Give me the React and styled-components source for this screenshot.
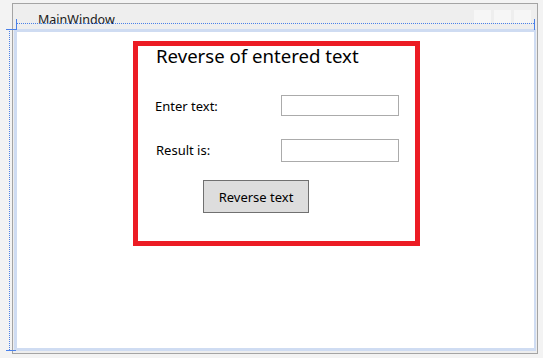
import React from "react";
import styled, { createGlobalStyle } from "styled-components";

const Global = createGlobalStyle`
  html, body { margin: 0; padding: 0; }
  body {
    background: #f3f3f3;
    font-family: "Noto Sans", "Open Sans", sans-serif;
    width: 543px;
    height: 358px;
    overflow: hidden;
  }
`;

const Stage = styled.div`
  position: relative;
  width: 543px;
  height: 358px;
  padding: 3px 0 0 12px;
  box-sizing: border-box;
`;

const Frame = styled.div`
  width: 526px;
  height: 351px;
  box-sizing: border-box;
  border: 1px solid #a4a4a4;
  background: #eeeeee;
  display: flex;
  flex-direction: column;
  padding: 0 1px 2px 1px;
`;

const TitleBar = styled.div`
  height: 25px;
  display: flex;
  align-items: flex-start;
  padding: 0 5px 0 24px;
  flex-shrink: 0;
`;

const TitleText = styled.span`
  font-size: 12.5px;
  color: #1a1a1a;
  line-height: 14px;
  margin-top: 9px;
`;

const CaptionButtons = styled.div`
  margin-left: auto;
  margin-top: 6px;
  display: flex;
  gap: 3px;
`;

const CaptionButton = styled.div`
  width: 17px;
  height: 13px;
  background: #f6f6f6;
`;

const Client = styled.div`
  flex: 1;
  background: #ffffff;
  border: 3px solid #cfdcf2;
  border-right-width: 2px;
  display: flex;
  flex-direction: column;
`;

const RedBox = styled.div`
  margin: 9px 0 0 116px;
  width: 287px;
  height: 205px;
  box-sizing: border-box;
  border: 5px solid #ec1c24;
  padding: 0 0 0 17px;
  display: flex;
  flex-direction: column;
  align-items: flex-start;
`;

const Heading = styled.div`
  font-size: 18.6px;
  line-height: 20px;
  color: #000;
  margin-left: 1px;
  white-space: nowrap;
`;

const Row = styled.div`
  display: flex;
  align-items: center;
  margin-top: ${(p) => p.$top}px;
  height: ${(p) => p.$h}px;
`;

const Label = styled.div`
  width: 126px;
  font-size: 13px;
  color: #000;
  padding-left: ${(p) => p.$indent || 0}px;
  margin-top: ${(p) => p.$shift || 0}px;
  box-sizing: border-box;
  white-space: nowrap;
`;

const TextBox = styled.div`
  width: 118px;
  height: 100%;
  box-sizing: border-box;
  border: 1px solid #ababab;
  background: #fff;
`;

const Button = styled.div`
  margin: 18px 0 0 48px;
  width: 106px;
  height: 33px;
  box-sizing: border-box;
  border: 1px solid #707070;
  background: #dddddd;
  display: flex;
  align-items: center;
  justify-content: center;
  font-size: 13px;
  color: #000;
`;

const HLine = styled.div`
  position: absolute;
  left: ${(p) => p.$x}px;
  top: ${(p) => p.$y}px;
  width: ${(p) => p.$w}px;
  height: 0;
  border-top: 1px ${(p) => (p.$dotted ? "dotted" : "solid")} #4a80e8;
`;

const VLine = styled.div`
  position: absolute;
  left: ${(p) => p.$x}px;
  top: ${(p) => p.$y}px;
  height: ${(p) => p.$h}px;
  width: 0;
  border-left: 1px ${(p) => (p.$dotted ? "dotted" : "solid")} #4a80e8;
`;

export default function App() {
  return (
    <>
      <Global />
      <Stage>
        <Frame>
          <TitleBar>
            <TitleText>MainWindow</TitleText>
            <CaptionButtons>
              <CaptionButton />
              <CaptionButton />
              <CaptionButton />
            </CaptionButtons>
          </TitleBar>
          <Client>
            <RedBox>
              <Heading>Reverse of entered text</Heading>
              <Row $top={29} $h={21}>
                <Label>Enter text:</Label>
                <TextBox />
              </Row>
              <Row $top={23} $h={23}>
                <Label $indent={1} $shift={-2}>Result is:</Label>
                <TextBox />
              </Row>
              <Button>Reverse text</Button>
            </RedBox>
          </Client>
        </Frame>
        <HLine $x={17} $y={23} $w={517} $dotted />
        <VLine $x={16} $y={19} $h={11} />
        <VLine $x={534} $y={19} $h={11} />
        <HLine $x={6} $y={29} $w={10} />
        <HLine $x={6} $y={350} $w={10} />
        <VLine $x={9} $y={31} $h={319} $dotted />
      </Stage>
    </>
  );
}
